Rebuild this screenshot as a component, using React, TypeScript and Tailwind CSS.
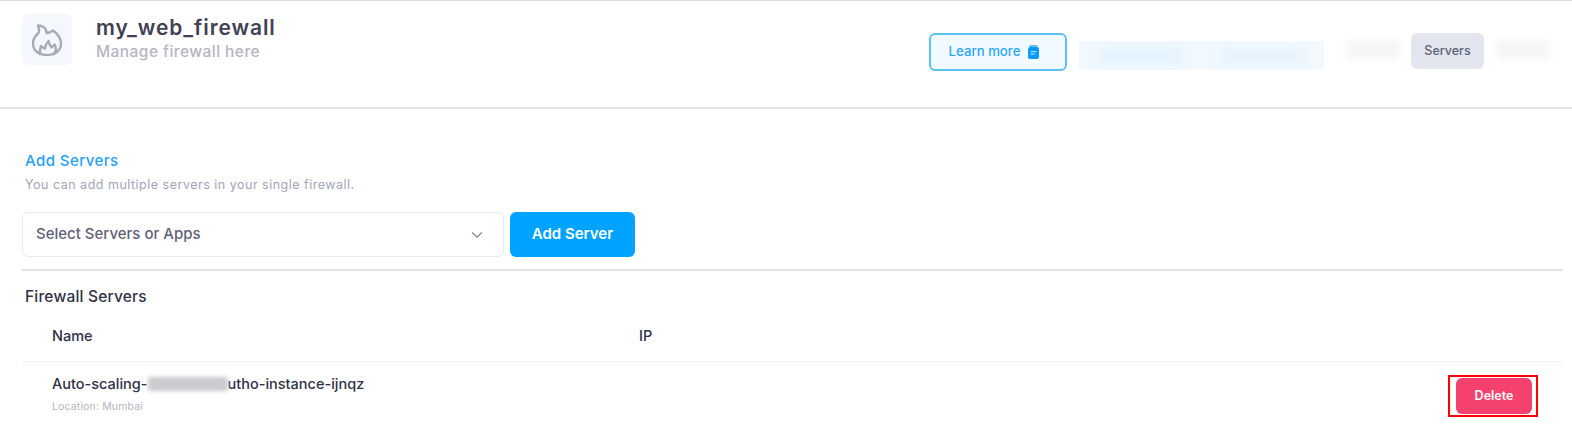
import React from "react";
import { ChevronDown } from "lucide-react";

const FONT = "font-['Inter','Open_Sans',sans-serif]";

const FlameIcon: React.FC = () => (
  <svg width="30" height="32" viewBox="0 0 30 32" fill="none" stroke="#a6aaba" strokeWidth="2.400" strokeLinejoin="round" strokeLinecap="round">
    <path d="M6 1.500C10 1.500 14.500 3.500 14.500 9C17 9 19 8 21 6.500C26 10 29 15 29 20C29 26.500 23 31 15 31C7 31 1 26.500 1 20C1 15 4 11 6.500 9C7.500 7 7 4 6 1.500Z" />
    <path d="M8 30C7.500 27 8 24.500 9 22C10 23 11.500 24 13 24.500C13.500 21.500 15 18.500 16.500 17C17 19.500 18 22 19.500 23.500C20.500 22.500 21.500 21.500 22.500 20.500C24.500 24 24 27.500 22 30" />
  </svg>
);

const NoteIcon: React.FC = () => (
  <svg width="11" height="14" viewBox="0 0 11 14">
    <rect x="1.500" y="0" width="8" height="3" rx="1" fill="#63b8fb" />
    <rect x="0" y="2" width="11" height="12" rx="2" fill="#0a9bfa" />
    <rect x="2.500" y="6" width="6" height="1.200" fill="#a9dcfd" />
    <rect x="2.500" y="8.500" width="4" height="1.200" fill="#a9dcfd" />
  </svg>
);

const Smudge: React.FC<{ className: string }> = ({ className }) => (
  <div className={`blur-[4px] ${className}`} />
);

export default function App() {
  return (
    <div className={`${FONT} w-[1572px] h-[444px] overflow-hidden bg-white border-t border-[#e0e0e0]`}>
      <header className="h-[108px] border-b-2 border-[#e2e2e4] pl-[22px] pr-[23px] flex justify-between">
        <div className="flex items-start pt-[13px]">
          <div className="w-[50px] h-[51px] rounded-md bg-[#f4f7fb] flex items-center justify-center">
            <FlameIcon />
          </div>
          <div className="ml-6 pt-[1px]">
            <h1 className="text-[21px] tracking-[0.9px] leading-[26px] font-semibold text-[#3f4254]">my_web_firewall</h1>
            <p className="text-[15.500px] tracking-[0.45px] leading-[22px] font-medium text-[#b5b5c3]">Manage firewall here</p>
          </div>
        </div>
        <div className="flex items-start pt-[32px]">
          <button className="w-[138px] h-[38px] pr-2 rounded-md border-2 border-[#5cc0fd] bg-[#f1faff] text-[#2aa7fa] text-[13.200px] font-medium flex items-center justify-center gap-2">
            Learn more <NoteIcon />
          </button>
          <div className="w-[245px] h-[29px] mt-[8px] ml-3 bg-[#f2f9fe] flex justify-around items-center overflow-hidden">
            <Smudge className="w-[85px] h-4 bg-[#e3f3fe]" />
            <Smudge className="w-[85px] h-4 bg-[#e6f4fe]" />
          </div>
          <Smudge className="w-[52px] h-[19px] mt-[7px] ml-[23px] bg-[#f5f5f7]" />
          <div className="w-[73px] h-[36px] ml-[12px] rounded-md bg-[#e4e6ef] text-[#5e6278] text-[12.500px] font-medium flex items-center justify-center">
            Servers
          </div>
          <Smudge className="w-[52px] h-[19px] mt-[7px] ml-[13px] bg-[#f5f5f7]" />
        </div>
      </header>

      <section className="pl-[22px] pr-[9px]">
        <h2 className="mt-[42px] ml-[3px] text-[15px] tracking-[0.45px] leading-5 font-medium text-[#1da1fa]">Add Servers</h2>
        <p className="mt-[6px] ml-[3px] text-[12.500px] tracking-[0.5px] leading-4 text-[#a1a5b7]">You can add multiple servers in your single firewall.</p>
        <div className="mt-[19px] flex gap-[6px]">
          <div className="w-[482px] h-[45px] rounded-md border border-[#e9e9f0] pl-[13px] pr-[17px] flex items-center justify-between text-[#5e6278] text-[15px] font-medium">
            Select Servers or Apps
            <ChevronDown size={18} strokeWidth={1.500} className="text-[#7e8299]" />
          </div>
          <button className="w-[125px] h-[45px] rounded-md bg-[#00a3ff] text-white text-[15px] font-semibold">Add Server</button>
        </div>
        <div className="mt-[12px] border-t-2 border-[#e2e2e4]" />
        <h3 className="mt-[16px] ml-[3px] text-[15.500px] tracking-[0.2px] leading-5 font-medium text-[#2f3146]">Firewall Servers</h3>
        <div className="mt-[4px] h-[51px] border-b border-[#f1f1f4] flex items-center">
          <span className="ml-[30px] w-[587px] text-[14.500px] font-medium text-[#2f3146]">Name</span>
          <span className="text-[14.500px] font-medium text-[#2f3146]">IP</span>
        </div>
        <div className="flex items-start justify-between pr-[25px]">
          <div className="ml-[30px] pt-[12px]">
            <div className="flex items-center text-[14.500px] leading-5 font-medium text-[#2f3146] whitespace-nowrap">
              Auto-scaling-
              <span className="w-[80px] h-[14px] blur-[2px] bg-[#cbcbd0]" />
              utho-instance-ijnqz
            </div>
            <div className="mt-[5px] text-[10.500px] tracking-[0.15px] leading-4 text-[#b5b5c3]">Location: Mumbai</div>
          </div>
          <div className="mt-[13px] border-2 border-[#ff0000] pl-[6px] pr-[4px] py-[1px] w-[90px] h-[42px] flex">
            <button className="w-full h-full rounded-md bg-[#f5416d] text-white text-[12.500px] font-semibold">Delete</button>
          </div>
        </div>
      </section>
    </div>
  );
}
